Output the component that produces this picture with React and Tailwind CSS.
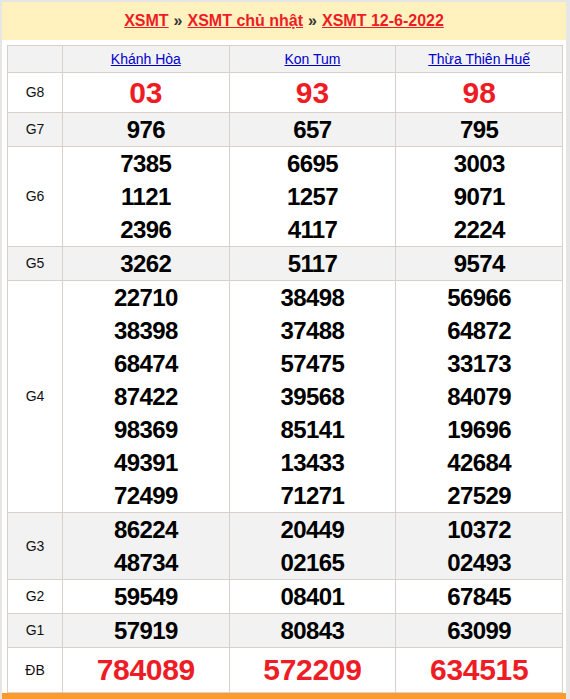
import React from "react";

const provinces = ["Khánh Hòa", "Kon Tum", "Thừa Thiên Huế"];

const rows = [
  { label: "G8", kind: "g8", cols: [["03"], ["93"], ["98"]] },
  { label: "G7", cols: [["976"], ["657"], ["795"]] },
  {
    label: "G6",
    cols: [
      ["7385", "1121", "2396"],
      ["6695", "1257", "4117"],
      ["3003", "9071", "2224"],
    ],
  },
  { label: "G5", cols: [["3262"], ["5117"], ["9574"]] },
  {
    label: "G4",
    cols: [
      ["22710", "38398", "68474", "87422", "98369", "49391", "72499"],
      ["38498", "37488", "57475", "39568", "85141", "13433", "71271"],
      ["56966", "64872", "33173", "84079", "19696", "42684", "27529"],
    ],
  },
  {
    label: "G3",
    cols: [
      ["86224", "48734"],
      ["20449", "02165"],
      ["10372", "02493"],
    ],
  },
  { label: "G2", cols: [["59549"], ["08401"], ["67845"]] },
  { label: "G1", cols: [["57919"], ["80843"], ["63099"]] },
  { label: "ĐB", kind: "db", cols: [["784089"], ["572209"], ["634515"]] },
];

export default function App() {
  return (
    <div
      className="min-h-[699px] bg-[#e6e6e6] px-[2px] pt-[2px]"
      style={{ fontFamily: '"Liberation Sans", Arial, sans-serif' }}
    >
      <div className="bg-white w-[564px]">
        <div className="h-[38px] bg-[#fff2be] flex items-center justify-center text-[16px] font-bold">
          <a className="text-[#ee1c25] underline">XSMT</a>
          <span className="mx-[5px] text-[#333]">»</span>
          <a className="text-[#ee1c25] underline">XSMT chủ nhật</a>
          <span className="mx-[5px] text-[#333]">»</span>
          <a className="text-[#ee1c25] underline">XSMT 12-6-2022</a>
        </div>
        <div className="px-[5px] pt-[5px]">
          <table className="w-[556px] border-collapse table-fixed">
            <colgroup>
              <col className="w-[55px]" />
              <col />
              <col />
              <col />
            </colgroup>
            <thead>
              <tr className="bg-[#f2f2f2] h-[27px]">
                <th className="border border-[#d8d0c9]"></th>
                {provinces.map((p) => (
                  <th
                    key={p}
                    className="border border-[#d8d0c9] text-[14px] font-normal text-[#0000cc] underline"
                  >
                    {p}
                  </th>
                ))}
              </tr>
            </thead>
            <tbody>
              {rows.map((r, i) => {
                const gray = i % 2 === 1;
                let numCls = "text-[24px] leading-[33px] tracking-[-0.6px] text-black";
                if (r.kind === "g8") {
                  numCls = "text-[30px] leading-[39px] text-[#ee1c25]";
                } else if (r.kind === "db") {
                  numCls = "text-[30px] leading-[44px] tracking-[-0.3px] text-[#ee1c25]";
                }
                return (
                  <tr key={r.label} className={gray ? "bg-[#f2f2f2]" : "bg-white"}>
                    <td className="border border-[#d8d0c9] text-center text-[14px] text-[#111]">
                      {r.label}
                    </td>
                    {r.cols.map((c, j) => (
                      <td
                        key={j}
                        className="border border-[#d8d0c9] text-center font-bold"
                      >
                        {c.map((n, k) => (
                          <div key={k} className={numCls}>
                            {n}
                          </div>
                        ))}
                      </td>
                    ))}
                  </tr>
                );
              })}
            </tbody>
          </table>
        </div>
        <div className="h-[10px] bg-[#fb9b2e]"></div>
      </div>
    </div>
  );
}
